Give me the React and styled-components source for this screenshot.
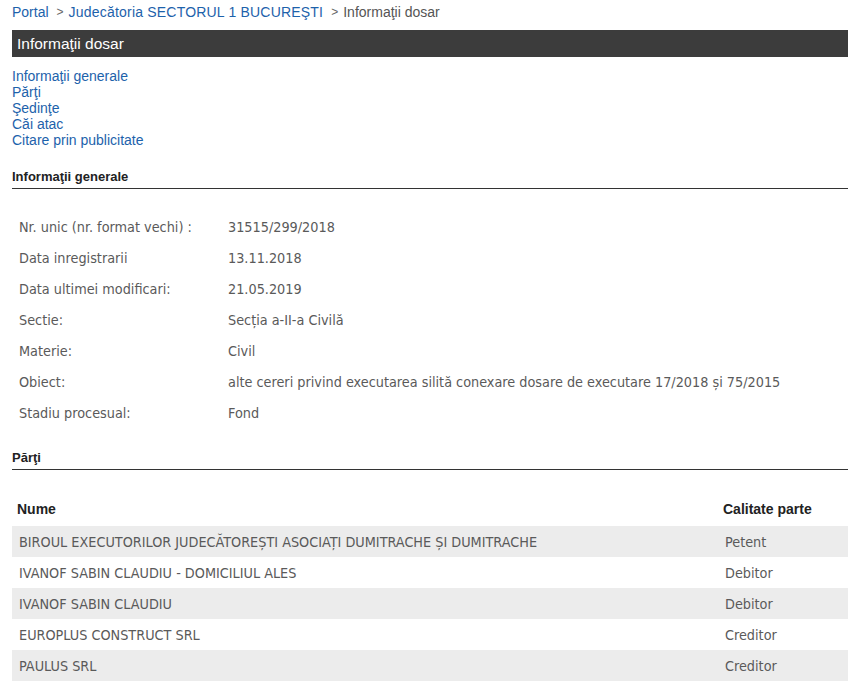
import React from 'react'
import styled, { createGlobalStyle } from 'styled-components'

const GlobalStyle = createGlobalStyle`
  body {
    margin: 0;
    background: #fff;
    font-family: "Liberation Sans", Arial, sans-serif;
  }
`

const Page = styled.div`
  width: 836px;
  padding: 0 3px 0 12px;
`

const Breadcrumb = styled.div`
  display: flex;
  align-items: center;
  height: 24px;
  font-size: 14px;
  color: #555;
`

const Crumb = styled.a`
  color: #1d62ab;
  text-decoration: none;
  letter-spacing: ${p => (p.$wide ? '0.2px' : 'normal')};
`

const Sep = styled.span`
  margin: 0 5px 0 8px;
  color: #666;
  font-size: 12px;
`

const TitleBar = styled.div`
  margin-top: 6px;
  height: 27px;
  background: #3c3c3c;
  color: #fff;
  font-size: 15.5px;
  line-height: 27px;
  padding-left: 5px;
`

const Nav = styled.div`
  display: flex;
  flex-direction: column;
  margin-top: 11px;
`

const NavLink = styled.a`
  color: #1d62ab;
  font-size: 14px;
  line-height: 16px;
  text-decoration: none;
`

const SectionTitle = styled.div`
  margin-top: ${p => p.$top}px;
  font-size: 13px;
  font-weight: bold;
  color: #222;
  padding-bottom: 4px;
  line-height: 15px;
  border-bottom: 1px solid #333;
`

const Table = styled.table`
  width: 100%;
  border-collapse: collapse;
  font-family: "DejaVu Sans Condensed", "DejaVu Sans", sans-serif;
  font-size: 14.3px;
  color: #5a5a5a;
`

const InfoTable = styled(Table)`
  margin-top: 22px;
`

const Cell = styled.td`
  height: 31px;
  padding: 0 7px;
  vertical-align: middle;
  white-space: nowrap;
  width: ${p => (p.$w ? `${p.$w}px` : 'auto')};
`

const HeadCell = styled.th`
  height: 35px;
  padding: 0 5px;
  text-align: left;
  width: ${p => (p.$w ? `${p.$w}px` : 'auto')};
  font-family: "Liberation Sans", Arial, sans-serif;
  font-weight: bold;
  font-size: 14px;
  color: #222;
`

const Row = styled.tr`
  background: ${p => (p.$striped ? '#ececec' : '#fff')};
`

const PartiesTable = styled(Table)`
  margin-top: 21px;
`

const info = [
  ['Nr. unic (nr. format vechi) :', '31515/299/2018'],
  ['Data inregistrarii', '13.11.2018'],
  ['Data ultimei modificari:', '21.05.2019'],
  ['Sectie:', 'Secția a-II-a Civilă'],
  ['Materie:', 'Civil'],
  ['Obiect:', 'alte cereri privind executarea silită conexare dosare de executare 17/2018 și 75/2015'],
  ['Stadiu procesual:', 'Fond'],
]

const parties = [
  ['BIROUL EXECUTORILOR JUDECĂTOREȘTI ASOCIAȚI DUMITRACHE ȘI DUMITRACHE', 'Petent'],
  ['IVANOF SABIN CLAUDIU - DOMICILIUL ALES', 'Debitor'],
  ['IVANOF SABIN CLAUDIU', 'Debitor'],
  ['EUROPLUS CONSTRUCT SRL', 'Creditor'],
  ['PAULUS SRL', 'Creditor'],
]

const App = () => (
  <Page>
    <GlobalStyle />
    <Breadcrumb>
      <Crumb href="#">Portal</Crumb>
      <Sep>&gt;</Sep>
      <Crumb href="#" $wide>Judecătoria SECTORUL 1 BUCUREŞTI</Crumb>
      <Sep>&gt;</Sep>
      <span>Informaţii dosar</span>
    </Breadcrumb>
    <TitleBar>Informaţii dosar</TitleBar>
    <Nav>
      <NavLink href="#">Informaţii generale</NavLink>
      <NavLink href="#">Părţi</NavLink>
      <NavLink href="#">Şedinţe</NavLink>
      <NavLink href="#">Căi atac</NavLink>
      <NavLink href="#">Citare prin publicitate</NavLink>
    </Nav>
    <SectionTitle $top={21}>Informaţii generale</SectionTitle>
    <InfoTable>
      <tbody>
        {info.map(([label, value]) => (
          <tr key={label}>
            <Cell $w={195}>{label}</Cell>
            <Cell>{value}</Cell>
          </tr>
        ))}
      </tbody>
    </InfoTable>
    <SectionTitle $top={22}>Părţi</SectionTitle>
    <PartiesTable>
      <thead>
        <tr>
          <HeadCell>Nume</HeadCell>
          <HeadCell $w={120}>Calitate parte</HeadCell>
        </tr>
      </thead>
      <tbody>
        {parties.map(([name, role], i) => (
          <Row key={name} $striped={i % 2 === 0}>
            <Cell>{name}</Cell>
            <Cell>{role}</Cell>
          </Row>
        ))}
      </tbody>
    </PartiesTable>
  </Page>
)

export default App
